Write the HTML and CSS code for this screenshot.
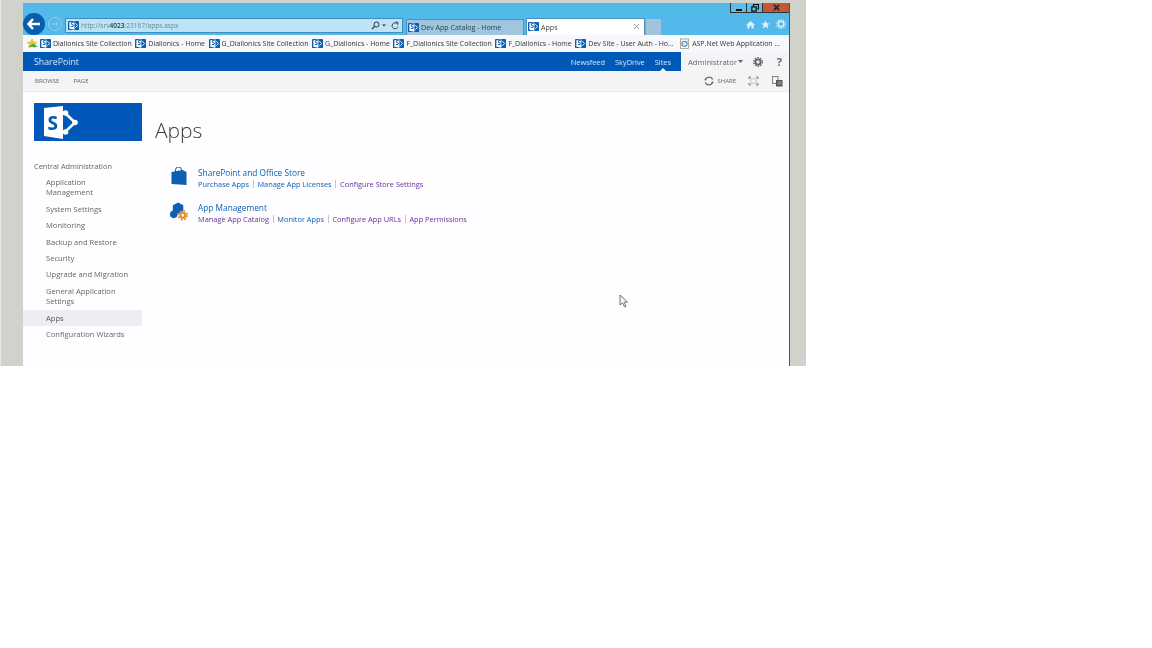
FILE: index.html
```html
<!DOCTYPE html>
<html>
  <head>
    <title>Apps</title>
    <link rel="stylesheet" href="styles.css">
  </head>
  <body>
    <svg class="defs" width="0" height="0">
      <symbol id="sp_icon" viewBox="0 0 12 12">
        <rect x="0" y="1" width="12" height="10" rx="1" fill="#0b5fb4"/>
        <path d="M1.5 2.5 L7 1.5 V10.5 L1.5 9.5 Z" fill="#fff"/>
        <text x="2.6" y="8" class="sp_letter">S</text>
        <path d="M8 3.5 L10.5 6 L8 8.5" fill="none" stroke="#fff" stroke-width="1"/>
      </symbol>
    </svg>
    <div id="screen">
      <div id="window">
        <div id="chrome">
          <div class="caption">
            <span class="cap_btn">
              <svg width="8" height="8" viewBox="0 0 8 8"><rect x="1" y="5" width="6" height="2" fill="#111"/></svg>
            </span>
            <span class="cap_btn">
              <svg width="8" height="8" viewBox="0 0 8 8"><path d="M2.5 2.5 V0.5 H7.5 V5 H5.5 M0.8 2.8 H5.2 V7.2 H0.8 Z" fill="none" stroke="#111" stroke-width="1.2"/></svg>
            </span>
            <span class="cap_btn close">
              <svg width="7" height="7" viewBox="0 0 8 8"><path d="M1 1 L7 7 M7 1 L1 7" stroke="#222" stroke-width="1.8"/></svg>
            </span>
          </div>
          <div class="toolbar">
            <span class="back">
              <svg width="14" height="12" viewBox="0 0 14 12"><path d="M6 1 L1.5 6 L6 11 M2 6 H13" fill="none" stroke="#fff" stroke-width="2.4"/></svg>
            </span>
            <span class="forward">
              <svg width="8" height="8" viewBox="0 0 8 8"><path d="M4.5 1 L7 4 L4.5 7 M1 4 H7" fill="none" stroke="#9ccbe6" stroke-width="1"/></svg>
            </span>
            <div class="address">
              <svg class="fav" width="11" height="11"><use href="#sp_icon"/></svg>
              <span class="url">http://srv<b>4023</b>:23167/apps.aspx</span>
              <svg width="9" height="9" viewBox="0 0 9 9"><circle cx="5.5" cy="3.5" r="2.5" fill="none" stroke="#333" stroke-width="1"/><path d="M3.5 5.5 L1 8" stroke="#333" stroke-width="1.3"/></svg>
              <svg class="drop" width="4" height="3" viewBox="0 0 5 3"><path d="M0 0 H5 L2.5 3 Z" fill="#555"/></svg>
              <svg class="reload" width="8" height="9" viewBox="0 0 8 9"><path d="M6.5 3 A3 3 0 1 0 7 5.5 M4.5 1 L7 1.5 L6.5 3.8" fill="none" stroke="#444" stroke-width="1"/></svg>
            </div>
            <div class="tab">
              <svg width="11" height="11"><use href="#sp_icon"/></svg>
              <span>Dev App Catalog - Home</span>
            </div>
            <div class="tab active">
              <svg width="11" height="11"><use href="#sp_icon"/></svg>
              <span>Apps</span>
              <svg class="tab_x" width="7" height="7" viewBox="0 0 7 7"><path d="M1 1 L6 6 M6 1 L1 6" stroke="#9a9a9a" stroke-width="1"/></svg>
            </div>
            <div class="tab_new"></div>
            <div class="tools">
              <svg width="9" height="9" viewBox="0 0 10 10"><path d="M5 1 L10 5.5 H8.5 V9.5 H6 V6.5 H4 V9.5 H1.5 V5.5 H0 Z" fill="#dff1fa"/></svg>
              <svg width="9" height="9" viewBox="0 0 11 11"><path d="M5.5 .5 L7 4 L10.7 4.2 L7.8 6.6 L8.8 10.3 L5.5 8.2 L2.2 10.3 L3.2 6.6 L.3 4.2 L4 4 Z" fill="#dff1fa"/></svg>
              <svg width="10" height="10" viewBox="0 0 11 11"><circle cx="5.5" cy="5.5" r="3" fill="none" stroke="#dff1fa" stroke-width="1.6"/><circle cx="5.5" cy="5.5" r="4.8" fill="none" stroke="#dff1fa" stroke-width="1.2" stroke-dasharray="1.6 1.4"/></svg>
            </div>
          </div>
        </div>

        <div id="favorites">
          <svg class="fav_star" width="13" height="12" viewBox="0 0 13 12"><path d="M6 0 L7.7 3.6 L11.6 4 L8.8 6.7 L9.6 10.6 L6 8.7 L2.4 10.6 L3.2 6.7 L.4 4 L4.3 3.6 Z" fill="#f0c040"/><path d="M2 9 H12 L7.5 5.5 Z" fill="#55a84a"/></svg>
          <a class="fav_item"><svg width="11" height="11"><use href="#sp_icon"/></svg>Diallonics Site Collection</a>
          <a class="fav_item"><svg width="11" height="11"><use href="#sp_icon"/></svg>Diallonics - Home</a>
          <a class="fav_item"><svg width="11" height="11"><use href="#sp_icon"/></svg>G_Diallonics Site Collection</a>
          <a class="fav_item"><svg width="11" height="11"><use href="#sp_icon"/></svg>G_Diallonics - Home</a>
          <a class="fav_item"><svg width="11" height="11"><use href="#sp_icon"/></svg>F_Diallonics Site Collection</a>
          <a class="fav_item"><svg width="11" height="11"><use href="#sp_icon"/></svg>F_Diallonics - Home</a>
          <a class="fav_item"><svg width="11" height="11"><use href="#sp_icon"/></svg>Dev Site - User Auth - Ho...</a>
          <a class="fav_item ie"><svg width="11" height="11" viewBox="0 0 11 11"><rect x="1.5" y="1" width="8" height="9.5" fill="#fff" stroke="#888" stroke-width=".7"/><circle cx="5.5" cy="5.8" r="2.6" fill="none" stroke="#3c8fd0" stroke-width="1.1"/><path d="M1 8 Q6 5 10 2" stroke="#e0a020" stroke-width=".8" fill="none"/></svg>ASP.Net Web Application ...</a>
        </div>

        <div id="suite_bar">
          <span class="brand">SharePoint</span>
          <a class="suite_link">Newsfeed</a>
          <a class="suite_link">SkyDrive</a>
          <a class="suite_link current">Sites</a>
          <div class="suite_user">
            <span class="user_name">Administrator</span>
            <svg class="drop" width="5" height="3" viewBox="0 0 5 3"><path d="M0 0 H5 L2.5 3 Z" fill="#666"/></svg>
            <svg class="gear" width="10" height="10" viewBox="0 0 11 11"><circle cx="5.5" cy="5.5" r="2.8" fill="none" stroke="#666" stroke-width="2"/><circle cx="5.5" cy="5.5" r="4.6" fill="none" stroke="#666" stroke-width="1.6" stroke-dasharray="1.7 1.2"/></svg>
            <span class="help">?</span>
          </div>
        </div>

        <div id="ribbon">
          <a class="ribbon_tab">BROWSE</a>
          <a class="ribbon_tab">PAGE</a>
          <div class="ribbon_actions">
            <svg width="10" height="10" viewBox="0 0 10 10"><path d="M8.8 3.5 A4 4 0 0 0 1.5 3.5 M1.2 6.5 A4 4 0 0 0 8.5 6.5" fill="none" stroke="#666" stroke-width="1.2"/><circle cx="1.5" cy="3.5" r="1" fill="#666"/><circle cx="8.5" cy="6.5" r="1" fill="#666"/></svg>
            <span class="share">SHARE</span>
            <svg class="focus" width="11" height="10" viewBox="0 0 11 10"><path d="M3 1 H1 V3 M8 1 H10 V3 M3 9 H1 V7 M8 9 H10 V7" fill="none" stroke="#777" stroke-width="1"/><rect x="2.8" y="2.8" width="5.4" height="4.4" fill="none" stroke="#aaa" stroke-width=".7"/></svg>
            <svg class="pages" width="11" height="11" viewBox="0 0 11 11"><rect x=".5" y=".5" width="5.5" height="7" fill="none" stroke="#777" stroke-width=".9"/><rect x="4" y="4" width="6.5" height="6.5" fill="#555"/><path d="M5.5 6 H9.5 M5.5 8 H9.5" stroke="#ccc" stroke-width=".7"/></svg>
          </div>
        </div>

        <div id="page">
          <div id="side">
            <div class="site_logo">
              <svg width="46" height="38" viewBox="0 0 46 38">
                <path d="M10 5 L29 3 V36 L10 33 Z" fill="#fff"/>
                <text x="13.5" y="27" class="logo_letter">S</text>
                <path d="M31 10 L41 19.5 L31 29" fill="none" stroke="#fff" stroke-width="2.5"/>
                <circle cx="31.5" cy="10" r="2.8" fill="#fff"/>
                <circle cx="31.5" cy="29" r="2.8" fill="#fff"/>
                <circle cx="41" cy="19.5" r="2.8" fill="#fff"/>
              </svg>
            </div>
            <div class="nav_head">Central Administration</div>
            <ul class="nav">
              <li>Application Management</li>
              <li>System Settings</li>
              <li>Monitoring</li>
              <li>Backup and Restore</li>
              <li>Security</li>
              <li>Upgrade and Migration</li>
              <li>General Application Settings</li>
              <li class="selected">Apps</li>
              <li>Configuration Wizards</li>
            </ul>
          </div>

          <div id="main">
            <h1>Apps</h1>
            <div class="section">
              <svg class="sec_icon" width="17" height="19" viewBox="0 0 17 19">
                <path d="M5 5 V3 A3 3 0 0 1 11 3 V5" fill="none" stroke="#0b5fb4" stroke-width="1"/>
                <path d="M1 5 L12 3 L16 5 V18 L1 17 Z" fill="#0b5fb4"/>
              </svg>
              <div>
                <a class="sec_title">SharePoint and Office Store</a>
                <div class="sec_links">
                  <a>Purchase Apps</a><i></i><a>Manage App Licenses</a><i></i><a class="visited">Configure Store Settings</a>
                </div>
              </div>
            </div>
            <div class="section">
              <svg class="sec_icon" width="19" height="19" viewBox="0 0 19 19">
                <path d="M8.5 0 L14 3 V9 L8.5 12 L3 9 V3 Z" fill="#0b5fb4"/>
                <circle cx="4" cy="12.5" r="4" fill="#0b5fb4"/>
                <circle cx="13.5" cy="13.5" r="2.6" fill="none" stroke="#e08a2c" stroke-width="2.2"/>
                <circle cx="13.5" cy="13.5" r="4.7" fill="none" stroke="#e08a2c" stroke-width="1.6" stroke-dasharray="2 1.7"/>
              </svg>
              <div>
                <a class="sec_title">App Management</a>
                <div class="sec_links">
                  <a class="visited">Manage App Catalog</a><i></i><a>Monitor Apps</a><i></i><a class="visited">Configure App URLs</a><i></i><a class="visited">App Permissions</a>
                </div>
              </div>
            </div>
          </div>

          <svg class="cursor" width="10" height="14" viewBox="0 0 10 14"><path d="M1 1 V11 L3.5 8.8 L5.5 13 L7 12.2 L5.2 8.2 L8.5 8 Z" fill="#f4f4f4" stroke="#555" stroke-width=".8"/></svg>
        </div>
      </div>
    </div>
  </body>
</html>
```

FILE: styles.css
```css
body { margin: 0; background: #fff; font-family: "Open Sans", "Liberation Sans", sans-serif; }
.defs { display: none; }
.sp_letter { font: bold 7px "Open Sans", sans-serif; fill: #0b5fb4; }
.logo_letter { font: bold 19px "Open Sans", sans-serif; fill: #0059b8; }

#screen { width: 806px; height: 366px; box-sizing: border-box; padding: 3px 16px 0 22px; border-left: 1px solid #e6e7e3; background: #d0d3cc; overflow: hidden; filter: blur(0.4px); }
#window { height: 363px; display: flex; flex-direction: column; border-right: 1px solid #555; background: #fefdff; }

#chrome { height: 32px; background: #52b9ea; flex: none; }
.caption { height: 10px; display: flex; justify-content: flex-end; }
.cap_btn { width: 16px; display: flex; align-items: center; justify-content: center; background: #5dbde9; border-left: 1px solid #333; border-bottom: 1px solid #333; box-sizing: border-box; }
.cap_btn.close { width: 27px; background: #c4563c; }

.toolbar { height: 22px; display: flex; align-items: flex-end; }
.back { width: 22px; height: 22px; margin-top: -1px; align-self: center; border-radius: 50%; background: #0a5cad; display: flex; align-items: center; justify-content: center; flex: none; }
.forward { width: 14px; height: 14px; margin: 0 3px; align-self: center; box-sizing: border-box; border: 1px solid #9ccbe6; border-radius: 50%; display: flex; align-items: center; justify-content: center; flex: none; }
.address { width: 338px; height: 15px; margin: 0 3px 2px 0; box-sizing: border-box; padding: 0 3px 0 2px; border: 1px solid #3e8fc0; background: #bde3f7; display: flex; align-items: center; gap: 2px; font-size: 6.6px; color: #6d8797; flex: none; }
.url { flex: 1; }
.url b { color: #2a3a46; font-weight: 600; }
.reload { margin-left: 3px; }
.tab { width: 118px; height: 16px; box-sizing: border-box; padding: 0 3px 1px 1px; margin-right: 2px; background: #9fc6de; border: 1px solid #4b94bf; border-bottom: 0; display: flex; align-items: center; gap: 2px; font-size: 7.1px; color: #2b4150; flex: none; }
.tab.active { width: 119px; height: 17px; margin-right: 1px; background: #fff; color: #444; }
.tab_x { margin-left: auto; margin-right: 1px; }
.tab_new { width: 15px; height: 16px; background: #9fc4dc; flex: none; }
.tools { flex: 1; height: 100%; padding-right: 3px; display: flex; align-items: center; justify-content: flex-end; gap: 6px; }

#favorites { height: 17px; background: #f7f8fb; flex: none; padding-left: 2.5px; display: flex; align-items: center; font-size: 6.97px; color: #333; white-space: nowrap; overflow: hidden; }
.fav_star { margin-right: 1.5px; flex: none; }
.fav_item { display: flex; align-items: center; gap: 2px; margin-right: 3.6px; }
.fav_item.ie { margin-left: 2px; }

#suite_bar { height: 19px; background: #0059b8; flex: none; display: flex; align-items: center; font-size: 7.4px; color: #d8e6f6; }
.brand { font-size: 8.8px; margin-left: 11px; margin-right: auto; }
.suite_link { margin-right: 10px; }
.suite_link.current { position: relative; }
.suite_link.current::after { content: ""; position: absolute; left: 50%; bottom: -4px; margin-left: -3px; border: 3px solid transparent; border-top: 0; border-bottom-color: #fff; }
.suite_user { width: 108px; height: 100%; box-sizing: border-box; padding: 0 7px; background: #f4f3f6; display: flex; align-items: center; font-size: 7.6px; color: #666; }
.user_name { margin-right: 1px; }
.gear { margin-left: 10px; }
.help { margin-left: auto; font-size: 11px; font-weight: 700; color: #666; }

#ribbon { height: 21px; background: #f4f3f6; border-bottom: 1px solid #ebeaee; box-sizing: border-box; flex: none; display: flex; align-items: center; padding-left: 12px; font-size: 6px; color: #666; }
.ribbon_tab { margin-right: 14px; }
.ribbon_actions { margin-left: auto; padding-right: 6px; display: flex; align-items: center; gap: 3px; }
.focus { margin-left: 9px; }
.pages { margin-left: 10px; }

#page { flex: 1; display: flex; position: relative; }
#side { width: 119px; flex: none; padding-top: 11px; }
.site_logo { width: 108px; height: 38px; margin-left: 11px; background: #0059b8; box-sizing: border-box; display: flex; align-items: center; }
.nav_head { margin: 20px 0 0 11px; height: 13px; font-size: 7.4px; line-height: 11px; color: #666; }
.nav { list-style: none; margin: 0; padding: 0; font-size: 7.6px; line-height: 10.6px; color: #666; }
.nav li { padding: 2.9px 10px 2.9px 23px; }
.nav li.selected { background: #efedf2; color: #555; }

#main { flex: 1; padding-left: 13px; }
h1 { margin: 24px 0 23px; font-size: 21px; line-height: 28px; font-weight: 300; color: #3a3a3a; }
.section { display: flex; margin: 0 0 13px 15px; gap: 10px; }
.sec_icon { margin-top: 0; flex: none; width: 18px; }
.sec_title { display: block; font-size: 8.3px; line-height: 12px; color: #0b5fb4; }
.sec_links { display: flex; align-items: center; font-size: 7.4px; line-height: 10px; color: #0b5fb4; }
.sec_links .visited { color: #663399; }
.sec_links i { width: 1px; height: 8px; margin: 0 3.7px; background: #c6c6c6; }

.cursor { position: absolute; left: 596px; top: 202px; }
```
